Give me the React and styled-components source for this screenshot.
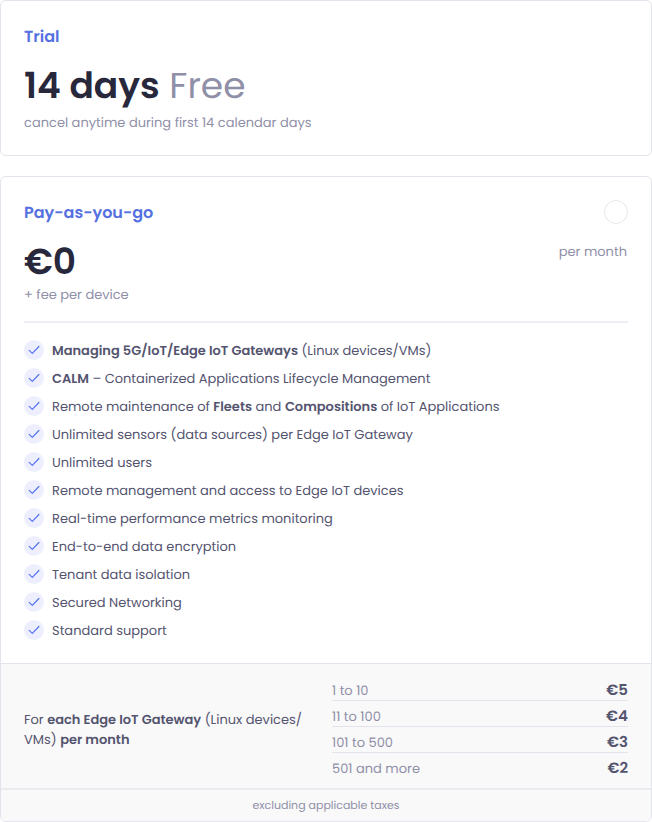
import React from 'react';
import styled, { createGlobalStyle } from 'styled-components';

const GlobalStyle = createGlobalStyle`
    * {
        box-sizing: border-box;
    }
    body {
        margin: 0;
        background: #FFFFFF;
        font-family: Poppins, Inter, sans-serif;
        font-size: 13px;
        line-height: 20px;
        color: #54546F;
        text-rendering: geometricPrecision;
    }
`;

const Plans = styled.div`
    display: flex;
    flex-direction: column;
    gap: 20px;
    width: 652px;
`;

const Card = styled.section`
    overflow: hidden;
    background: #FFFFFF;
    border: 1px solid #E3E3EC;
    border-radius: 6px;
`;

const CardBody = styled.div`
    padding: 23px;
`;

const CardHeader = styled.div`
    display: flex;
    justify-content: space-between;
    align-items: center;
    height: 24px;
`;

const Title = styled.h3`
    margin: 0;
    padding-top: 2px;
    font-weight: 600;
    font-size: 16px;
    line-height: 24px;
    color: #5570E0;
`;

const Radio = styled.span`
    width: 24px;
    height: 24px;
    border: 1px solid #E6E6EE;
    border-radius: 50%;
`;

const PriceRow = styled.div`
    display: flex;
    justify-content: space-between;
    margin-top: 12px;
`;

const Price = styled.div`
    font-weight: 600;
    font-size: 36px;
    line-height: 52px;
    white-space: nowrap;
    color: #28283D;
`;

const PriceNote = styled.span`
    font-weight: 400;
    color: #8F8FA8;
`;

const Muted = styled.div`
    color: #8F8FA8;
`;

const Caption = styled(Muted)`
    height: 20px;
    margin-top: ${({ $offset }) => $offset || 0}px;
    padding-top: 1px;
`;

const Period = styled(Muted)`
    padding: 6px 1px 0 0;
`;

const Features = styled.ul`
    display: flex;
    flex-direction: column;
    gap: 8px;
    margin: 17px 0 0;
    padding: 17px 0 0;
    border-top: 2px solid #EEEEF6;
    list-style: none;
`;

const Feature = styled.li`
    display: flex;
    gap: 8px;
    height: 20px;
`;

const FeatureText = styled.span`
    padding-top: 1px;
    white-space: nowrap;
`;

const Check = styled.span`
    display: flex;
    flex: none;
    width: 20px;
    height: 20px;
    border-radius: 50%;
    background: #EDEFFF;
`;

const Strong = styled.strong`
    font-weight: 600;
`;

const Rates = styled.div`
    display: grid;
    grid-template-columns: 284px 296px;
    column-gap: 24px;
    height: 125px;
    padding: 0 23px;
    border-top: 1px solid #E3E3EC;
    background: #F9F9F9;
`;

const RatesText = styled.div`
    align-self: center;
    padding-top: 8px;
`;

const Line = styled.div`
    white-space: nowrap;
`;

const RateList = styled.div`
    padding-top: 11px;
`;

const Rate = styled.div`
    display: flex;
    justify-content: space-between;
    height: 26px;
    padding-top: 6px;
    border-bottom: 1px solid #E3E3EC;
    &:last-child {
        border-bottom-color: transparent;
    }
`;

const RateValue = styled.span`
    font-weight: 600;
    font-size: 15px;
`;

const Taxes = styled.div`
    height: 33px;
    border-top: 2px solid #EAEAF0;
    background: #F9F9F9;
    font-size: 11px;
    line-height: 30px;
    text-align: center;
    color: #8F8FA8;
`;

const features = [
    { id: 1, text: <><Strong>Managing 5G/IoT/Edge IoT Gateways</Strong> (Linux devices/VMs)</> },
    { id: 2, text: <><Strong>CALM</Strong> – Containerized Applications Lifecycle Management</> },
    { id: 3, text: <>Remote maintenance of <Strong>Fleets</Strong> and <Strong>Compositions</Strong> of IoT Applications</> },
    { id: 4, text: 'Unlimited sensors (data sources) per Edge IoT Gateway' },
    { id: 5, text: 'Unlimited users' },
    { id: 6, text: 'Remote management and access to Edge IoT devices' },
    { id: 7, text: 'Real-time performance metrics monitoring' },
    { id: 8, text: 'End-to-end data encryption' },
    { id: 9, text: 'Tenant data isolation' },
    { id: 10, text: 'Secured Networking' },
    { id: 11, text: 'Standard support' },
];

const rates = [
    { range: '1 to 10', price: '€5' },
    { range: '11 to 100', price: '€4' },
    { range: '101 to 500', price: '€3' },
    { range: '501 and more', price: '€2' },
];

const CheckIcon = () => (
    <Check>
        <svg width="20" height="20" viewBox="0 0 20 20" fill="none">
            <path
                d="M5.2 10.4L8.3 13.4L14.9 6.5"
                stroke="#5874EA"
                strokeWidth="1.2"
                strokeLinecap="round"
                strokeLinejoin="round"
            />
        </svg>
    </Check>
);

const App = () => (
    <>
        <GlobalStyle />
        <Plans>
            <Card>
                <CardBody>
                    <CardHeader>
                        <Title>Trial</Title>
                    </CardHeader>
                    <PriceRow>
                        <Price>14 days<PriceNote> Free</PriceNote></Price>
                    </PriceRow>
                    <Caption>cancel anytime during first 14 calendar days</Caption>
                </CardBody>
            </Card>
            <Card>
                <CardBody>
                    <CardHeader>
                        <Title>Pay-as-you-go</Title>
                        <Radio />
                    </CardHeader>
                    <PriceRow>
                        <Price>€0</Price>
                        <Period>per month</Period>
                    </PriceRow>
                    <Caption $offset={-4}>+ fee per device</Caption>
                    <Features>
                        {features.map(item => (
                            <Feature key={item.id}>
                                <CheckIcon />
                                <FeatureText>{item.text}</FeatureText>
                            </Feature>
                        ))}
                    </Features>
                </CardBody>
                <Rates>
                    <RatesText>
                        <Line>For <Strong>each Edge IoT Gateway</Strong> (Linux devices/</Line>
                        <Line>VMs) <Strong>per month</Strong></Line>
                    </RatesText>
                    <RateList>
                        {rates.map(item => (
                            <Rate key={item.range}>
                                <Muted>{item.range}</Muted>
                                <RateValue>{item.price}</RateValue>
                            </Rate>
                        ))}
                    </RateList>
                </Rates>
                <Taxes>excluding applicable taxes</Taxes>
            </Card>
        </Plans>
    </>
);

export default App;
